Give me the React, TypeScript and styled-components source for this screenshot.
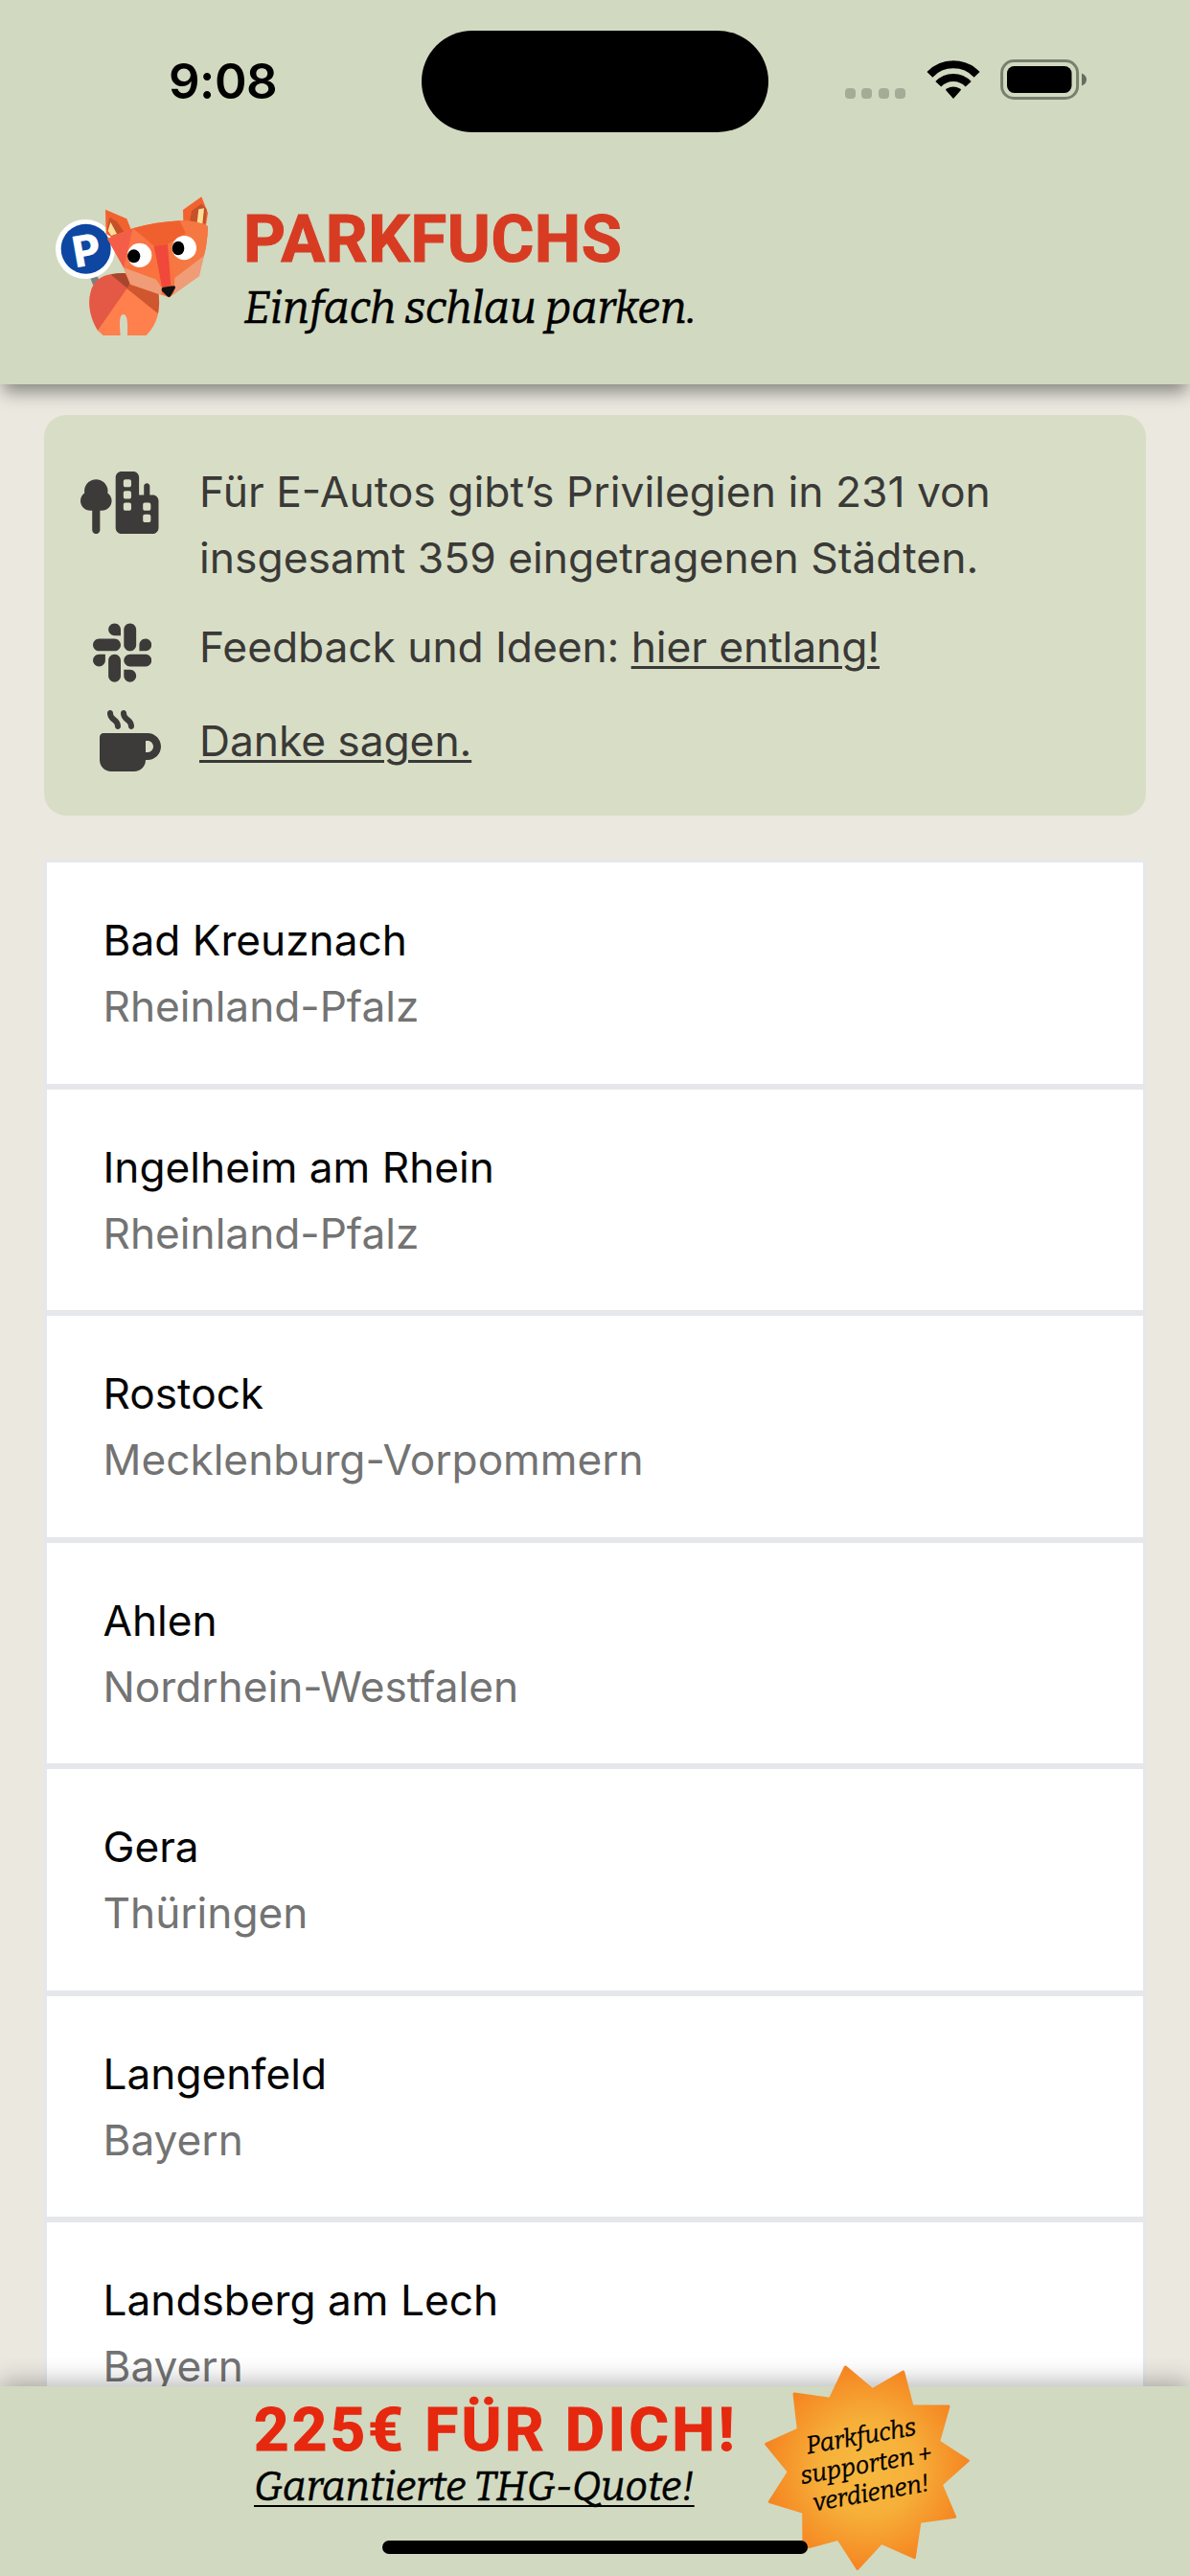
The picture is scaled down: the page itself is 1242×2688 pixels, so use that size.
import React from "react";
import styled, { createGlobalStyle } from "styled-components";
import { FaTreeCity, FaSlack, FaMugHot } from "react-icons/fa6";

const sans = `Inter, "Liberation Sans", sans-serif`;
const display = `Roboto, "Liberation Sans", sans-serif`;
const slab = `Bitter, "DejaVu Serif Condensed", "DejaVu Serif", serif`;

const GlobalStyle = createGlobalStyle`
  *, *::before, *::after { box-sizing: border-box; }
  body { margin: 0; background: #ebe8e0; }
`;

const Screen = styled.div`
  display: flex;
  flex-direction: column;
  width: 1242px;
  height: 2688px;
  overflow: hidden;
  background: #ebe8e0;
  font-family: ${sans};
`;

const Header = styled.header`
  position: relative;
  z-index: 2;
  flex: none;
  height: 401px;
  background: #d1d9c0;
  box-shadow: 0 11px 17px -3px rgba(0, 0, 0, 0.42);
`;

const StatusBar = styled.div`
  display: grid;
  grid-template-columns: 440px 362px 440px;
  height: 170px;
  padding-top: 32px;
`;

const Clock = styled.div`
  padding: 22px 0 0 176px;
  font-size: 51px;
  font-weight: 600;
  line-height: 62px;
  letter-spacing: -0.5px;
  color: #000;
`;

const Island = styled.div`
  height: 106px;
  border-radius: 53px;
  background: #000;
`;

const Indicators = styled.div`
  display: flex;
  align-items: flex-start;
  padding: 30px 0 0 80px;
`;

const Dots = styled.div`
  display: flex;
  gap: 6.4px;
  margin: 30px 22px 0 0;
`;

const Dot = styled.i`
  width: 11px;
  height: 11px;
  border-radius: 4px;
  background: rgba(0, 0, 0, 0.21);
`;

const Wifi = styled.svg`
  width: 56px;
  height: 42px;
  margin-right: 21px;
`;

const Battery = styled.svg`
  width: 92px;
  height: 42px;
`;

const Brand = styled.div`
  display: flex;
  padding: 20px 0 0 40px;
`;

const Fox = styled.svg`
  flex: none;
  width: 200px;
  height: 180px;
`;

const BrandText = styled.div`
  padding: 20px 0 0 14px;
`;

const Title = styled.h1`
  margin: 0;
  font: 700 68.5px/80px ${display};
  letter-spacing: 0.6px;
  color: #d73c23;
  -webkit-text-stroke: 1.1px #d73c23;
`;

const Tagline = styled.p`
  margin: 1.5px 0 0 0.5px;
  font: italic 400 46.2px/60px ${slab};
  color: #000;
  -webkit-text-stroke: 0.5px #000;
  white-space: nowrap;
`;

const Content = styled.main`
  flex: 1;
  min-height: 0;
  overflow: hidden;
  padding: 32px 46px 0;
`;

const InfoCard = styled.section`
  display: flex;
  flex-direction: column;
  height: 418px;
  padding: 46px 30px 0 37px;
  border-radius: 23px;
  background: #d8dec6;
  color: #3a3937;
`;

const InfoRow = styled.div<{ $gap?: number }>`
  display: flex;
  align-items: flex-start;
  margin-top: ${(p) => p.$gap ?? 0}px;
`;

const IconSlot = styled.span<{ $left: number; $top: number; $w: number; $h: number }>`
  display: flex;
  flex: none;
  width: 125px;
  height: 0;
  padding: ${(p) => p.$top}px 0 0 ${(p) => p.$left}px;
  color: #3d3b39;

  svg {
    flex: none;
    width: ${(p) => p.$w}px;
    height: ${(p) => p.$h}px;
  }
`;

const InfoText = styled.p<{ $tracking?: number }>`
  margin: 0;
  font-size: 44.4px;
  line-height: 69.2px;
  letter-spacing: ${(p) => p.$tracking ?? 0}px;
  white-space: nowrap;
`;

const Link = styled.a`
  color: inherit;
  text-decoration: underline;
  text-decoration-thickness: 3px;
  text-underline-offset: 4px;
`;

const CityList = styled.ul`
  margin: 46px 0 0;
  padding: 0;
  list-style: none;
`;

const CityRow = styled.li`
  height: 236.5px;
  padding: 47px 0 0 58.5px;
  border: 3px solid #e5e7eb;
  background: #fff;
`;

const CityName = styled.div`
  font-size: 44.2px;
  line-height: 69.2px;
  color: #050505;
`;

const Region = styled(CityName)`
  color: #737373;
`;

const Footer = styled.footer`
  position: relative;
  z-index: 2;
  display: flex;
  flex: none;
  height: 198.5px;
  padding-left: 265px;
  background: #d1d9c0;
  box-shadow: 0 -4px 24px rgba(0, 0, 0, 0.3);
`;

const Promo = styled.div`
  width: 532.5px;
  padding-top: 8px;
`;

const PromoTitle = styled.div`
  font: 700 63.6px/76px ${display};
  letter-spacing: 3.3px;
  color: #e6280f;
  -webkit-text-stroke: 1.1px #e6280f;
  white-space: nowrap;
`;

const PromoLink = styled.a`
  display: block;
  width: max-content;
  margin-top: -7px;
  font: italic 400 42px/56px ${slab};
  color: #000;
  -webkit-text-stroke: 0.5px #000;
  text-decoration: underline;
  text-decoration-thickness: 2px;
  text-decoration-skip-ink: none;
  text-underline-offset: 5px;
  white-space: nowrap;
`;

const Badge = styled.div`
  position: relative;
  flex: none;
  width: 214px;
  height: 214px;
  margin-top: -22px;
`;

const Star = styled.svg`
  display: block;
  width: 214px;
  height: 214px;
`;

const BadgeText = styled.div`
  position: absolute;
  inset: 0;
  display: flex;
  align-items: center;
  justify-content: center;
  padding: 0 1px 6px 0;
  transform: rotate(-10deg);
  font: italic 400 25.6px/29.8px ${slab};
  text-align: center;
  color: #000;
  -webkit-text-stroke: 0.3px #000;
`;

const HomeBar = styled.div`
  position: absolute;
  left: 399px;
  bottom: 23.5px;
  width: 444px;
  height: 14px;
  border-radius: 7px;
  background: #000;
`;

const cities: [string, string][] = [
  ["Bad Kreuznach", "Rheinland-Pfalz"],
  ["Ingelheim am Rhein", "Rheinland-Pfalz"],
  ["Rostock", "Mecklenburg-Vorpommern"],
  ["Ahlen", "Nordrhein-Westfalen"],
  ["Gera", "Thüringen"],
  ["Langenfeld", "Bayern"],
  ["Landsberg am Lech", "Bayern"],
];

function FoxLogo() {
  return (
    <Fox viewBox="0 0 600 540">
      <path d="M150 268 L168 262 L190 306 L172 324Z" fill="#7c8080" />
      <circle cx="147" cy="210" r="93" fill="#fff" />
      <circle cx="149" cy="209" r="78" fill="#0d47a1" />
      <text
        x="151"
        y="262"
        textAnchor="middle"
        transform="rotate(-10 148 214)"
        fontFamily="Inter, sans-serif"
        fontWeight="800"
        fontSize="134"
        fill="#fff"
      >
        P
      </text>
      <path
        d="M186 464 C162 425 154 380 164 344 C176 300 215 286 272 285 L376 352 C382 400 376 440 338 480 L279 480 C280 440 280 415 266 414 C253 415 254 440 257 480 L203 480Z"
        fill="#ff7f4d"
      />
      <path d="M186 464 C162 425 154 380 164 344 C172 312 195 294 226 289 L279 331Z" fill="#e45846" />
      <path d="M226 289 Q248 284 272 285 L288 319 L279 333Z" fill="#a8452c" />
      <path d="M286 318 L377 350 Q381 382 375 412 L277 333Z" fill="#cf562e" />
      <path d="M210 86 L277 115 L291 150 L229 172 L212 162Z" fill="#f2622f" />
      <path d="M223 110 L246 124 L268 155 L228 170 L216 150Z" fill="#c4512a" />
      <path d="M226 125 L246 162 L228 168 L218 152Z" fill="#fadf98" />
      <path d="M511 46 L531 97 L524 140 L454 126 L453 87Z" fill="#f2622f" />
      <path d="M511 68 L527 85 L523 130 L474 122 L480 90Z" fill="#c4512a" />
      <path d="M502 85 L519 82 L514 130 L497 127Z" fill="#fadf98" />
      <path
        d="M216 177 L296 145 Q370 124 443 121 Q490 119 531 138 Q530 190 517 235 L500 295 L410 361 L288 320 L268 270Z"
        fill="#f9733f"
      />
      <path d="M216 177 L296 145 L268 268Z" fill="#f45d48" />
      <path d="M296 145 Q370 124 443 121 L462 160 L405 195 L362 200Z" fill="#f0602f" />
      <path d="M296 145 L362 200 L350 240 L268 268Z" fill="#fa7547" />
      <path d="M443 121 Q490 119 531 138 Q530 190 519 230 L427 300 L405 195 L462 160Z" fill="#f57843" />
      <path d="M362 200 L405 195 L415 326 L386 328Z" fill="#f0483a" />
      <path d="M268 268 L370 305 L388 333 L384 353 L288 320Z" fill="#ef9c77" />
      <path d="M519 230 L504 295 L424 351 L427 300Z" fill="#ef9c77" />
      <path d="M370 305 L352 250 L366 220 L386 325Z" fill="#fa733e" />
      <circle cx="317" cy="229" r="38" fill="#fff" />
      <circle cx="457" cy="206" r="38" fill="#fff" />
      <ellipse cx="299" cy="232" rx="20" ry="21" fill="#000" />
      <ellipse cx="438" cy="207" rx="19" ry="22" fill="#000" />
      <path d="M390 329 L424 325 Q431 326 428 333 L414 357 Q410 362 404 358 L387 341 Q384 332 390 329Z" fill="#111" />
    </Fox>
  );
}

export default function App() {
  return (
    <Screen>
      <GlobalStyle />
      <Header>
        <StatusBar>
          <Clock>9:08</Clock>
          <Island />
          <Indicators>
            <Dots>
              <Dot />
              <Dot />
              <Dot />
              <Dot />
            </Dots>
            <Wifi viewBox="0 0 56 42" fill="none" stroke="#000" strokeWidth="8.2">
              <path d="M3.4 15.8 A34 34 0 0 1 52.6 15.8" />
              <path d="M12.3 25.8 A21.5 21.5 0 0 1 43.7 25.8" />
              <path d="M20.5 32.5 Q19.3 31.3 21 30.6 Q28 26.2 35 30.6 Q36.7 31.3 35.5 32.5 L28 41Z" fill="#000" stroke="none" />
            </Wifi>
            <Battery viewBox="0 0 92 42">
              <rect x="1.6" y="1.6" width="79" height="38.8" rx="12.5" fill="none" stroke="#000" strokeOpacity="0.42" strokeWidth="3" />
              <rect x="7" y="7" width="67.5" height="28" rx="7.5" fill="#000" />
              <path d="M85 14.5 Q90 16.5 90 21 Q90 25.5 85 27.5Z" fill="#000" fillOpacity="0.5" />
            </Battery>
          </Indicators>
        </StatusBar>
        <Brand>
          <FoxLogo />
          <BrandText>
            <Title>PARKFUCHS</Title>
            <Tagline>Einfach schlau parken.</Tagline>
          </BrandText>
        </Brand>
      </Header>

      <Content>
        <InfoCard>
          <InfoRow>
            <IconSlot $left={1} $top={13} $w={81.5} $h={65.2}>
              <FaTreeCity />
            </IconSlot>
            <InfoText>
              Für E-Autos gibt’s Privilegien in 231 von
              <br />
              insgesamt 359 eingetragenen Städten.
            </InfoText>
          </InfoRow>
          <InfoRow $gap={24}>
            <IconSlot $left={13.5} $top={4.5} $w={61.3} $h={70}>
              <FaSlack />
            </IconSlot>
            <InfoText $tracking={-0.1}>
              Feedback und Ideen: <Link>hier entlang!</Link>
            </InfoText>
          </InfoRow>
          <InfoRow $gap={28.5}>
            <IconSlot $left={21} $top={1.5} $w={64} $h={64}>
              <FaMugHot />
            </IconSlot>
            <InfoText $tracking={-0.1}>
              <Link>Danke sagen.</Link>
            </InfoText>
          </InfoRow>
        </InfoCard>

        <CityList>
          {cities.map(([name, region]) => (
            <CityRow key={name}>
              <CityName>{name}</CityName>
              <Region>{region}</Region>
            </CityRow>
          ))}
        </CityList>
      </Content>

      <Footer>
        <Promo>
          <PromoTitle>225€ FÜR DICH!</PromoTitle>
          <PromoLink>Garantierte THG-Quote!</PromoLink>
        </Promo>
        <Badge>
          <Star viewBox="111 82 642 642">
            <defs>
              <radialGradient id="sun" gradientUnits="userSpaceOnUse" cx="433" cy="403" r="325">
                <stop offset="0" stopColor="#f7b940" />
                <stop offset="0.45" stopColor="#f6b03a" />
                <stop offset="1" stopColor="#f58420" />
              </radialGradient>
            </defs>
            <path
              d="M364 88 L449 159 L545 103 L573 210 L687 211 L656 321 L748 381 L664 456 L707 557 L597 572 L580 684 L477 638 L402 719 L342 626 L234 655 L233 542 L127 510 L187 416 L116 329 L217 283 L204 172 L316 188Z"
              fill="url(#sun)"
              stroke="url(#sun)"
              strokeWidth="9"
              strokeLinejoin="round"
            />
          </Star>
          <BadgeText>
            Parkfuchs
            <br />
            supporten +
            <br />
            verdienen!
          </BadgeText>
        </Badge>
        <HomeBar />
      </Footer>
    </Screen>
  );
}
